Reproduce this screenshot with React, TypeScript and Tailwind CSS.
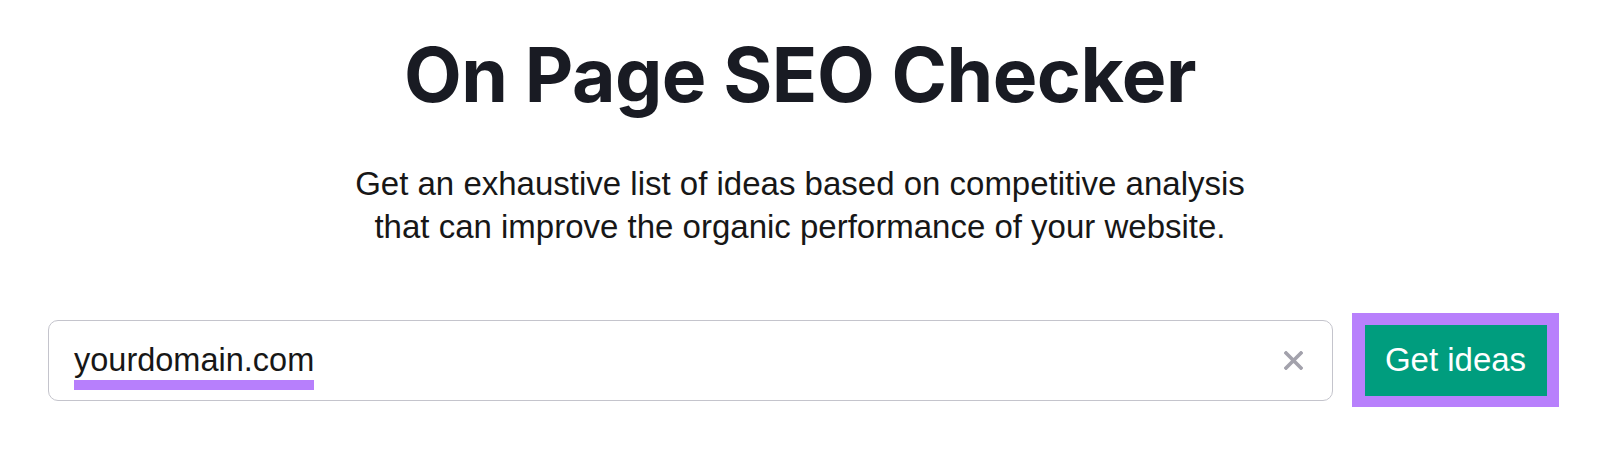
import { useState } from 'react';

export default function App() {
  const [domain, setDomain] = useState('yourdomain.com');

  return (
    <div className="w-[1600px] h-[476px] bg-white flex flex-col items-center overflow-hidden">
      <h1 className="mt-[37px] text-[75px] leading-none font-bold tracking-[-0.5px] text-[#191b23] font-['Inter',sans-serif]">
        On Page SEO Checker
      </h1>

      <p className="mt-[50px] text-center text-[33px] leading-[43px] text-[#171717] font-['Liberation_Sans',Arial,sans-serif]">
        Get an exhaustive list of ideas based on competitive analysis
        <br />
        that can improve the organic performance of your website.
      </p>

      {/* Search bar */}
      <div className="mt-[66px] w-full flex items-center gap-[19px] pl-12 pr-[41px]">
        <div className="flex-1 h-[81px] flex items-center border border-[#c4c4cc] rounded-[10px] pl-[25px] pr-[29px]">
          <span className="relative text-[32.5px] leading-none text-[#171717] font-['Liberation_Sans',Arial,sans-serif]">
            {domain}
            <span className="absolute left-0 right-0 top-[36px] h-[10px] bg-[#b77ffc]" />
          </span>
          <button
            onClick={() => setDomain('')}
            className="ml-auto w-5 h-5 flex items-center justify-center"
          >
            <svg width="19" height="19" viewBox="0 0 19 19" fill="none">
              <path d="M2 2L17 17M17 2L2 17" stroke="#a3a2ac" strokeWidth="3.6" strokeLinecap="square" />
            </svg>
          </button>
        </div>

        <div className="w-[207px] h-[94px] flex items-center justify-center bg-[#b880fc] -mt-[1px]">
          <button className="w-[182px] h-[71px] bg-[#009d7e] text-white text-[33px] font-['Liberation_Sans',Arial,sans-serif]">
            Get ideas
          </button>
        </div>
      </div>
    </div>
  );
}
